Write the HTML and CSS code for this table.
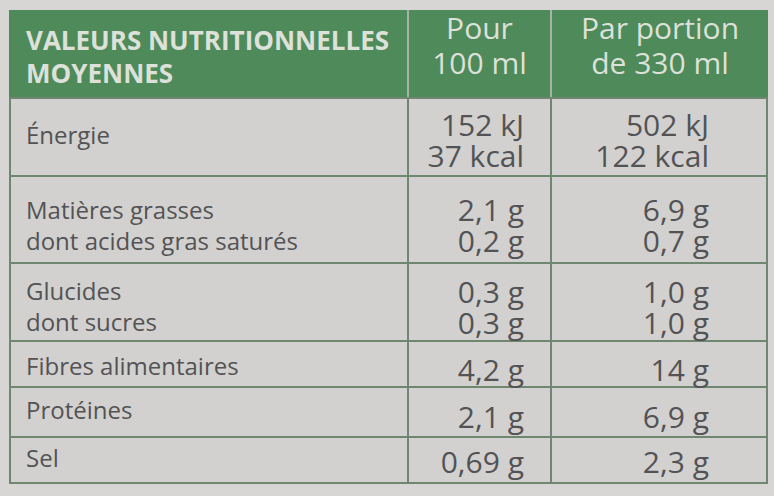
FILE: index.html
```html
<!DOCTYPE html>
<html lang="fr">
<head>
<meta charset="utf-8">
<title>Valeurs nutritionnelles</title>
<link rel="stylesheet" href="styles.css">
</head>
<body>
<div class="panel">
  <div class="head">
    <div class="hcell hmain">VALEURS NUTRITIONNELLES<br>MOYENNES</div>
    <div class="hcell hcol">Pour<br>100 ml</div>
    <div class="hcell hcol">Par portion<br>de 330 ml</div>
  </div>
  <div class="body">
    <div class="lab r1">Énergie</div>
    <div class="val v2 r1">152 kJ<br>37 kcal</div>
    <div class="val v3 r1">502 kJ<br>122 kcal</div>

    <div class="lab r2">Matières grasses<br>dont acides gras saturés</div>
    <div class="val v2 r2">2,1 g<br>0,2 g</div>
    <div class="val v3 r2">6,9 g<br>0,7 g</div>

    <div class="lab r3">Glucides<br>dont sucres</div>
    <div class="val v2 r3">0,3 g<br>0,3 g</div>
    <div class="val v3 r3">1,0 g<br>1,0 g</div>

    <div class="lab r4">Fibres alimentaires</div>
    <div class="val v2 r4">4,2 g</div>
    <div class="val v3 r4">14 g</div>

    <div class="lab r5">Protéines</div>
    <div class="val v2 r5">2,1 g</div>
    <div class="val v3 r5">6,9 g</div>

    <div class="lab r6">Sel</div>
    <div class="val v2 r6">0,69 g</div>
    <div class="val v3 r6">2,3 g</div>
  </div>
</div>
</body>
</html>
```
FILE: styles.css
```css
html, body {
  margin: 0;
  padding: 0;
}
body {
  background: #d7d6d4;
  font-family: "Open Sans", "Noto Sans", sans-serif;
  width: 774px;
  height: 496px;
  overflow: hidden;
}
.panel {
  margin: 10px 0 0 9px;
  width: 759px;
}
.head {
  display: grid;
  grid-template-columns: 398px 141px 216px;
  column-gap: 2px;
  height: 87px;
  background: #a7b3a5;
}
.hcell {
  background: #4f8a5b;
  color: #dde1d9;
}
.hmain {
  font-weight: 700;
  font-size: 26px;
  line-height: 33px;
  padding: 14px 0 0 17px;
}
.hcol {
  font-size: 30px;
  line-height: 35px;
  text-align: center;
  padding-top: 0;
}
.body {
  display: grid;
  grid-template-columns: 396px 141px 214px;
  grid-template-rows: 76px 85px 76px 44px 48px 44px;
  gap: 2px;
  padding: 2px;
  background: #6f8673;
}
.lab, .val {
  background: #d2d1cf;
  color: #535355;
  box-sizing: border-box;
}
.lab {
  font-size: 24px;
  line-height: 31px;
  padding-left: 15px;
}
.val {
  font-size: 30px;
  line-height: 31px;
  text-align: right;
}
.v2 { padding-right: 26px; }
.v3 { padding-right: 57px; }

.lab.r1 { padding-top: 20px; }
.val.r1 { padding-top: 10px; }
.lab.r2 { padding-top: 17px; }
.val.r2 { padding-top: 17px; }
.lab.r3 { padding-top: 11px; }
.val.r3 { padding-top: 12px; }
.lab.r4 { padding-top: 8px; }
.val.r4 { padding-top: 12px; }
.lab.r5 { padding-top: 6px; }
.val.r5 { padding-top: 13px; }
.lab.r6 { padding-top: 4px; }
.val.r6 { padding-top: 8px; }
```
